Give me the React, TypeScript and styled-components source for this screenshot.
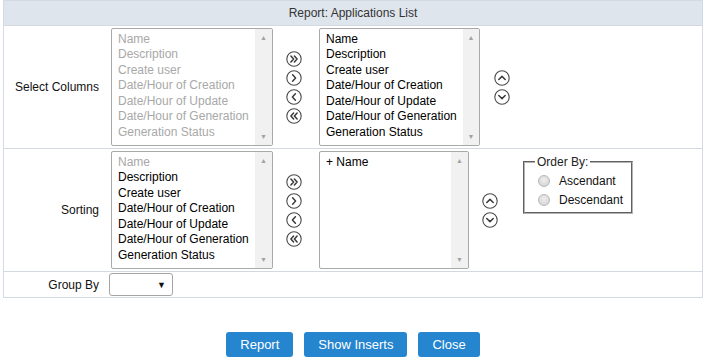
import React from 'react'
import styled, { createGlobalStyle } from 'styled-components'

const GlobalStyle = createGlobalStyle`
  body {
    margin: 0;
    background: #ffffff;
    font-family: 'Liberation Sans', Arial, sans-serif;
    font-size: 12px;
    color: #000;
  }
`

const Page = styled.div`
  padding: 0 3px;
`

const Table = styled.div`
  border: 1px solid #d3dae1;
`

const Header = styled.div`
  height: 24px;
  line-height: 24px;
  background: #dfe5ed;
  text-align: center;
  color: #333;
  font-size: 12px;
`

const Row = styled.div<{ $pad?: number }>`
  display: flex;
  align-items: center;
  border-top: 1px solid #d3d9df;
  padding: ${p => p.$pad ?? 2}px 0;
`

const Label = styled.div`
  width: 95px;
  margin-right: 12px;
  text-align: right;
  color: #111;
`

const ListBox = styled.div<{ $width: number }>`
  display: flex;
  width: ${p => p.$width}px;
  height: 118px;
  box-sizing: border-box;
  border: 1px solid #a9a9a9;
  border-radius: 2px;
  background: #fff;
  overflow: hidden;
`

const Items = styled.div`
  flex: 1;
  padding: 3px 6px;
`

const Item = styled.div<{ $muted?: boolean }>`
  height: 15.45px;
  line-height: 15.45px;
  white-space: nowrap;
  color: ${p => (p.$muted ? '#a8a8a8' : '#000')};
`

const Track = styled.div`
  width: 17px;
  background: #f1f1f1;
  display: flex;
  flex-direction: column;
  justify-content: space-between;
  align-items: center;
  padding: 4px 0 3px;
  color: #a3a3a3;
  font-size: 7px;
  line-height: 10px;
`

const IconStack = styled.div<{ $left: number; $right: number }>`
  display: flex;
  flex-direction: column;
  gap: 3px;
  margin: 0 ${p => p.$right}px 0 ${p => p.$left}px;
`

const IconButton = styled.svg`
  display: block;
  width: 16px;
  height: 16px;
`

const Side = styled.div`
  align-self: flex-start;
  margin: 5px 0 0 25px;
`

const Fieldset = styled.fieldset`
  width: 110px;
  height: 58px;
  box-sizing: border-box;
  margin: 0;
  padding: 3px 0 0 13px;
  border: 2px groove #b4b4b4;
  legend {
    padding: 0 2px;
    margin-left: -3px;
    color: #222;
    font-size: 12px;
    line-height: 12px;
  }
`

const RadioRow = styled.label`
  display: flex;
  align-items: center;
  height: 19px;
  color: #111;
  font-size: 12px;
`

const Radio = styled.span`
  width: 12px;
  height: 12px;
  border-radius: 50%;
  border: 1px solid #b8b8b8;
  background: radial-gradient(circle at 50% 40%, #eeeeee, #cfcfcf);
  margin-right: 9px;
  box-sizing: border-box;
`

const SelectBox = styled.div`
  width: 64px;
  height: 23px;
  margin-left: -2px;
  box-sizing: border-box;
  border: 1px solid #a5a5a5;
  border-radius: 3px;
  display: flex;
  align-items: center;
  justify-content: flex-end;
  padding-right: 6px;
  font-size: 9px;
  color: #111;
`

const ButtonBar = styled.div`
  display: flex;
  justify-content: center;
  gap: 11px;
  margin-top: 34px;
`

const Button = styled.button`
  height: 25px;
  padding: 0 14px;
  border: none;
  border-radius: 3px;
  background: #2585cf;
  color: #fff;
  font-family: 'Liberation Sans', Arial, sans-serif;
  font-size: 13px;
  cursor: pointer;
`

const columns = [
  'Name',
  'Description',
  'Create user',
  'Date/Hour of Creation',
  'Date/Hour of Update',
  'Date/Hour of Generation',
  'Generation Status',
]

const paths: Record<string, string> = {
  all: 'M4.9 5 L7.6 8 L4.9 11 M8.4 5 L11.1 8 L8.4 11',
  one: 'M6.6 4.8 L9.6 8 L6.6 11.2',
  back: 'M9.4 4.8 L6.4 8 L9.4 11.2',
  none: 'M7.6 5 L4.9 8 L7.6 11 M11.1 5 L8.4 8 L11.1 11',
  up: 'M4.8 9.5 L8 6.4 L11.2 9.5',
  down: 'M4.8 6.5 L8 9.6 L11.2 6.5',
}

const CircleIcon = ({ kind }: { kind: string }) => (
  <IconButton viewBox="0 0 16 16">
    <circle cx="8" cy="8" r="7.2" fill="none" stroke="#4a4a4a" strokeWidth="1.1" />
    <path d={paths[kind]} fill="none" stroke="#3a3a3a" strokeWidth="1.5" strokeLinecap="round" strokeLinejoin="round" />
  </IconButton>
)

const List = ({ width, items, muted }: { width: number; items: string[]; muted: (i: number) => boolean }) => (
  <ListBox $width={width}>
    <Items>
      {items.map((item, i) => (
        <Item key={item} $muted={muted(i)}>
          {item}
        </Item>
      ))}
    </Items>
    <Track>
      <span>▲</span>
      <span>▼</span>
    </Track>
  </ListBox>
)

const Transfer = () => (
  <IconStack $left={13} $right={17}>
    <CircleIcon kind="all" />
    <CircleIcon kind="one" />
    <CircleIcon kind="back" />
    <CircleIcon kind="none" />
  </IconStack>
)

const Order = ({ left }: { left: number }) => (
  <IconStack $left={left} $right={0}>
    <CircleIcon kind="up" />
    <CircleIcon kind="down" />
  </IconStack>
)

export default function App() {
  return (
    <Page>
      <GlobalStyle />
      <Table>
        <Header>Report: Applications List</Header>
        <Row>
          <Label>Select Columns</Label>
          <List width={162} items={columns} muted={() => true} />
          <Transfer />
          <List width={161} items={columns} muted={() => false} />
          <Order left={14} />
        </Row>
        <Row>
          <Label>Sorting</Label>
          <List width={162} items={columns} muted={i => i === 0} />
          <Transfer />
          <List width={150} items={['+ Name']} muted={() => false} />
          <Order left={13} />
          <Side>
            <Fieldset>
              <legend>Order By:</legend>
              <RadioRow>
                <Radio />
                Ascendant
              </RadioRow>
              <RadioRow>
                <Radio />
                Descendant
              </RadioRow>
            </Fieldset>
          </Side>
        </Row>
        <Row $pad={1}>
          <Label>Group By</Label>
          <SelectBox>▼</SelectBox>
        </Row>
      </Table>
      <ButtonBar>
        <Button>Report</Button>
        <Button>Show Inserts</Button>
        <Button>Close</Button>
      </ButtonBar>
    </Page>
  )
}
